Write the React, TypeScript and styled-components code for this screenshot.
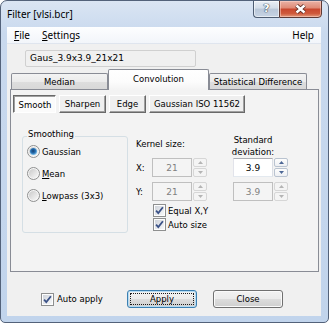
import React from "react";
import styled, { createGlobalStyle, css } from "styled-components";

const PANEL_BG = "#f3f3f3";

const GlobalStyle = createGlobalStyle`
  html, body { margin: 0; padding: 0; background: #ffffff; }
  body {
    font-family: "DejaVu Sans", "Liberation Sans", sans-serif;
    font-size: 8.5px;
    color: #000;
  }
  *, *::before, *::after { box-sizing: border-box; }
`;

const Window = styled.div`
  width: 329px;
  height: 323px;
  display: flex;
  flex-direction: column;
  border: 1px solid #53627a;
  border-radius: 7px 7px 5px 5px;
  padding: 0 7px 6px 6px;
  background: linear-gradient(180deg, #dae5f3 0%, #c9d9ee 10%, #c1d4ec 100%);
  overflow: hidden;
`;

const TitleBar = styled.div`
  height: 26px;
  flex: none;
  display: flex;
  align-items: flex-start;
`;

const Title = styled.div`
  flex: 1;
  padding-top: 6px;
  font-family: "Noto Sans", "Liberation Sans", sans-serif;
  font-size: 10px;
  line-height: 14px;
  color: #000;
`;

const CaptionButtons = styled.div`
  display: flex;
  margin-top: -1px;
  margin-right: -1px;
`;

const CaptionButton = styled.div<{ $kind: "help" | "close" }>`
  height: 18px;
  display: flex;
  align-items: center;
  justify-content: center;
  border: 1px solid #4e5d72;
  ${(p) =>
    p.$kind === "help"
      ? css`
          width: 26px;
          border-right: none;
          border-radius: 0 0 0 4px;
          background: linear-gradient(180deg, #e9eef5 0%, #d3dde9 45%, #b9c7d8 50%, #c7d4e4 100%);
          box-shadow: inset 0 0 0 1px rgba(255, 255, 255, 0.55);
        `
      : css`
          width: 43px;
          border-color: #5e3a35;
          border-radius: 0 0 4px 0;
          background: linear-gradient(180deg, #eab2a6 0%, #df8a75 44%, #c8472e 50%, #cf5a3c 78%, #e29a7c 100%);
          box-shadow: inset 0 0 0 1px rgba(255, 220, 210, 0.5);
        `}
`;

const HelpGlyph = styled.span`
  font-family: "DejaVu Sans", sans-serif;
  font-weight: bold;
  font-size: 11px;
  line-height: 12px;
  color: #ffffff;
  text-shadow: 0 0 1px #3b4859, 0 0 1px #3b4859, 0 0 1px #3b4859;
`;

const Client = styled.div`
  flex: 1;
  display: flex;
  flex-direction: column;
  background: #f0f0f0;
`;

const MenuBar = styled.div`
  height: 17px;
  flex: none;
  display: flex;
  align-items: center;
  padding: 0 1px;
  background: linear-gradient(180deg, #fdfeff 0%, #f2f5fa 100%);
  border-bottom: 1px solid #dfe5ee;
  font-family: "Noto Sans", "Liberation Sans", sans-serif;
  font-size: 10px;
`;

const MenuItem = styled.span<{ $right?: boolean }>`
  padding: 0 6px;
  line-height: 16px;
  ${(p) => p.$right && "margin-left: auto;"}
`;

const Mnemonic = styled.span`
  text-decoration: underline;
  text-underline-offset: 1px;
`;

const NameField = styled.div`
  margin: 6px 0 0 18px;
  width: 171px;
  height: 17px;
  flex: none;
  border: 1px solid #d0d0d0;
  border-radius: 2px;
  background: #f0f0f0;
  padding-left: 4px;
  font-size: 9px;
  line-height: 15px;
`;

const TabArea = styled.div`
  margin: 2px 2px 0 3px;
  display: flex;
  flex-direction: column;
`;

const TabRow = styled.div`
  height: 20px;
  display: flex;
  align-items: flex-end;
  padding-left: 1px;
`;

const Tab = styled.div<{ $selected?: boolean; $w: number }>`
  position: relative;
  width: ${(p) => p.$w}px;
  height: ${(p) => (p.$selected ? 21 : 16)}px;
  margin-bottom: ${(p) => (p.$selected ? -1 : 0)}px;
  z-index: ${(p) => (p.$selected ? 2 : 1)};
  display: flex;
  align-items: center;
  justify-content: center;
  padding-bottom: ${(p) => (p.$selected ? 2 : 0)}px;
  border: 1px solid #898c95;
  border-bottom: none;
  border-radius: 2px 2px 0 0;
  background: ${(p) =>
    p.$selected
      ? `linear-gradient(180deg, #ffffff 0%, #fcfcfc 60%, ${PANEL_BG} 100%)`
      : "linear-gradient(180deg, #f3f3f3 0%, #ebebeb 50%, #dedede 51%, #d8d8d8 100%)"};
`;

const Panel = styled.div`
  height: 183px;
  border: 1px solid #898c95;
  background: ${PANEL_BG};
  display: flex;
  flex-direction: column;
`;

const ModeRow = styled.div`
  display: flex;
  gap: 3px;
  margin: 5px 0 0 2px;
`;

const ModeButton = styled.div<{ $pressed?: boolean; $w: number }>`
  width: ${(p) => p.$w}px;
  height: 18px;
  display: flex;
  align-items: center;
  justify-content: center;
  border: 1px solid;
  ${(p) =>
    p.$pressed
      ? css`
          background: #fbfbfb;
          border-color: #696969 #ffffff #ffffff #696969;
          box-shadow: inset 1px 1px 0 #a0a0a0;
          padding: 1px 0 0 1px;
        `
      : css`
          background: #efefef;
          border-color: #ffffff #696969 #696969 #ffffff;
          box-shadow: inset -1px -1px 0 #a0a0a0;
        `}
`;

const ContentRow = styled.div`
  display: flex;
  align-items: flex-start;
  padding-left: 11px;
`;

const GroupBox = styled.div`
  margin-top: 23px;
  width: 106px;
  height: 97px;
  border: 1px solid #d5dfe5;
  border-radius: 3px;
  padding-left: 4px;
  display: flex;
  flex-direction: column;
`;

const GroupLabel = styled.span`
  align-self: flex-start;
  margin-top: -8px;
  padding: 0 1px;
  line-height: 11px;
  background: ${PANEL_BG};
`;

const RadioList = styled.div`
  display: flex;
  flex-direction: column;
  gap: 9px;
  margin-top: 5px;
`;

const OptionRow = styled.div<{ $gap?: number; $mt?: number; $pl?: number }>`
  display: flex;
  align-items: center;
  height: 13px;
  gap: ${(p) => p.$gap ?? 2}px;
  margin-top: ${(p) => p.$mt ?? 0}px;
  padding-left: ${(p) => p.$pl ?? 0}px;
  white-space: nowrap;
`;

const Glyph = styled.svg`
  flex: none;
  display: block;
`;

const KernelCol = styled.div`
  margin: 25px 0 0 8px;
  width: 71px;
  display: flex;
  flex-direction: column;
`;

const StdCol = styled.div`
  margin: 21px 0 0 24px;
  display: flex;
  flex-direction: column;
`;

const Caption = styled.div<{ $w?: number; $center?: boolean }>`
  line-height: 12px;
  white-space: nowrap;
  ${(p) => p.$w && `width: ${p.$w}px;`}
  ${(p) => p.$center && "text-align: center;"}
`;

const FieldRow = styled.div<{ $mt: number; $pl?: number }>`
  display: flex;
  align-items: center;
  margin-top: ${(p) => p.$mt}px;
  padding-left: ${(p) => p.$pl ?? 0}px;
`;

const AxisLabel = styled.span`
  width: 16px;
`;

const Edit = styled.div<{ $disabled?: boolean }>`
  width: 40px;
  height: 19px;
  display: flex;
  align-items: center;
  justify-content: center;
  font-size: 9px;
  border: 1px solid;
  ${(p) =>
    p.$disabled
      ? css`
          background: #f4f4f4;
          border-color: #bfbfbf;
          color: #808080;
        `
      : css`
          background: #ffffff;
          border-color: #abadb3 #dbdfe6 #e3e9ef #e2e3ea;
          color: #000;
        `}
`;

const Spin = styled.div`
  margin-left: 1px;
  width: 14px;
  height: 19px;
  display: flex;
  flex-direction: column;
  gap: 1px;
`;

const SpinHalf = styled.div<{ $disabled?: boolean }>`
  flex: 1;
  display: flex;
  align-items: center;
  justify-content: center;
  border: 1px solid ${(p) => (p.$disabled ? "#d6d6d6" : "#b9c3d0")};
  border-radius: 2px;
  background: ${(p) =>
    p.$disabled ? "#f4f4f4" : "linear-gradient(180deg, #fdfdfd 0%, #eef0f3 100%)"};
  color: ${(p) => (p.$disabled ? "#b4b4b4" : "#4d6796")};
`;

const Footer = styled.div`
  display: flex;
  align-items: center;
  margin-top: 18px;
  padding-left: 34px;
`;

const AutoApply = styled.div`
  width: 86px;
  display: flex;
  align-items: center;
  gap: 3px;
`;

const PushButton = styled.div<{ $default?: boolean }>`
  width: 70px;
  height: 18px;
  display: flex;
  align-items: center;
  justify-content: center;
  border: 1px solid ${(p) => (p.$default ? "#3c7fb1" : "#707070")};
  border-radius: 3px;
  background: linear-gradient(180deg, #f2f2f2 0%, #ebebeb 49%, #dddddd 50%, #cfcfcf 100%);
  box-shadow: inset 0 0 0 1px ${(p) => (p.$default ? "#b5dcf3" : "#fafafa")};
  ${(p) =>
    p.$default &&
    css`
      outline: 1px dotted #1a1a1a;
      outline-offset: -4px;
    `}
`;

const ButtonGap = styled.div`
  width: 16px;
`;

function Radio({ checked }: { checked?: boolean }) {
  return (
    <Glyph width="13" height="13" viewBox="0 0 13 13">
      <defs>
        <linearGradient id="radioIn" x1="0" y1="0" x2="1" y2="1">
          <stop offset="0" stopColor="#c9c9c9" />
          <stop offset="1" stopColor="#f9f9f9" />
        </linearGradient>
        <radialGradient id="radioDot" cx="0.45" cy="0.42" r="0.6">
          <stop offset="0" stopColor="#123f70" />
          <stop offset="0.55" stopColor="#2870b3" />
          <stop offset="1" stopColor="#8fd0f4" />
        </radialGradient>
      </defs>
      <circle cx="6.5" cy="6.5" r="6" fill="#f6f6f6" stroke="#8e8f8f" />
      <circle cx="6.5" cy="6.5" r="4.6" fill="url(#radioIn)" />
      {checked && <circle cx="6.5" cy="6.5" r="3.6" fill="url(#radioDot)" />}
    </Glyph>
  );
}

function Check() {
  return (
    <Glyph width="13" height="13" viewBox="0 0 13 13">
      <defs>
        <linearGradient id="checkIn" x1="0" y1="0" x2="1" y2="1">
          <stop offset="0" stopColor="#cfd3da" />
          <stop offset="1" stopColor="#f7f8f9" />
        </linearGradient>
      </defs>
      <rect x="0.5" y="0.5" width="12" height="12" fill="#fdfdfd" stroke="#8e8f8f" />
      <rect x="2" y="2" width="9" height="9" fill="url(#checkIn)" />
      <path d="M3.1 6.6 L5.3 9.1 L9.9 3.3" fill="none" stroke="#3b5287" strokeWidth="1.8" />
    </Glyph>
  );
}

function Arrow({ up }: { up?: boolean }) {
  return (
    <Glyph width="5" height="3" viewBox="0 0 5 3">
      <path d={up ? "M0 3 L2.5 0 L5 3 Z" : "M0 0 L5 0 L2.5 3 Z"} fill="currentColor" />
    </Glyph>
  );
}

function SpinBox({ disabled }: { disabled?: boolean }) {
  return (
    <Spin>
      <SpinHalf $disabled={disabled}>
        <Arrow up />
      </SpinHalf>
      <SpinHalf $disabled={disabled}>
        <Arrow />
      </SpinHalf>
    </Spin>
  );
}

export default function App() {
  return (
    <>
      <GlobalStyle />
      <Window>
        <TitleBar>
          <Title>Filter [vlsi.bcr]</Title>
          <CaptionButtons>
            <CaptionButton $kind="help">
              <HelpGlyph>?</HelpGlyph>
            </CaptionButton>
            <CaptionButton $kind="close">
              <Glyph width="13" height="10" viewBox="0 0 13 10">
                <path d="M2.5 1.5 L10.5 8.5 M10.5 1.5 L2.5 8.5" stroke="#5b2c24" strokeWidth="4.2" />
                <path d="M2.5 1.5 L10.5 8.5 M10.5 1.5 L2.5 8.5" stroke="#ffffff" strokeWidth="2.4" />
              </Glyph>
            </CaptionButton>
          </CaptionButtons>
        </TitleBar>
        <Client>
          <MenuBar>
            <MenuItem>
              <Mnemonic>F</Mnemonic>ile
            </MenuItem>
            <MenuItem>
              <Mnemonic>S</Mnemonic>ettings
            </MenuItem>
            <MenuItem $right>Help</MenuItem>
          </MenuBar>
          <NameField>Gaus_3.9x3.9_21x21</NameField>
          <TabArea>
            <TabRow>
              <Tab $w={97}>Median</Tab>
              <Tab $w={101} $selected>
                Convolution
              </Tab>
              <Tab $w={98}>Statistical Difference</Tab>
            </TabRow>
            <Panel>
              <ModeRow>
                <ModeButton $w={43} $pressed>
                  Smooth
                </ModeButton>
                <ModeButton $w={47}>Sharpen</ModeButton>
                <ModeButton $w={37}>Edge</ModeButton>
                <ModeButton $w={96}>Gaussian ISO 11562</ModeButton>
              </ModeRow>
              <ContentRow>
                <GroupBox>
                  <GroupLabel>Smoothing</GroupLabel>
                  <RadioList>
                    <OptionRow>
                      <Radio checked />
                      <span>Gaussian</span>
                    </OptionRow>
                    <OptionRow>
                      <Radio />
                      <span>
                        <Mnemonic>M</Mnemonic>ean
                      </span>
                    </OptionRow>
                    <OptionRow>
                      <Radio />
                      <span>
                        <Mnemonic>L</Mnemonic>owpass (3x3)
                      </span>
                    </OptionRow>
                  </RadioList>
                </GroupBox>
                <KernelCol>
                  <Caption>Kernel size:</Caption>
                  <FieldRow $mt={8}>
                    <AxisLabel>X:</AxisLabel>
                    <Edit $disabled>21</Edit>
                    <SpinBox disabled />
                  </FieldRow>
                  <FieldRow $mt={5}>
                    <AxisLabel>Y:</AxisLabel>
                    <Edit $disabled>21</Edit>
                    <SpinBox disabled />
                  </FieldRow>
                  <OptionRow $mt={3} $pl={17}>
                    <Check />
                    <span>Equal X,Y</span>
                  </OptionRow>
                  <OptionRow $mt={1} $pl={17}>
                    <Check />
                    <span>Auto size</span>
                  </OptionRow>
                </KernelCol>
                <StdCol>
                  <Caption $w={44} $center>
                    Standard
                    <br />
                    deviation:
                  </Caption>
                  <FieldRow $mt={0} $pl={2}>
                    <Edit>3.9</Edit>
                    <SpinBox />
                  </FieldRow>
                  <FieldRow $mt={5} $pl={2}>
                    <Edit $disabled>3.9</Edit>
                    <SpinBox disabled />
                  </FieldRow>
                </StdCol>
              </ContentRow>
            </Panel>
          </TabArea>
          <Footer>
            <AutoApply>
              <Check />
              <span>Auto apply</span>
            </AutoApply>
            <PushButton $default>Apply</PushButton>
            <ButtonGap />
            <PushButton>Close</PushButton>
          </Footer>
        </Client>
      </Window>
    </>
  );
}
